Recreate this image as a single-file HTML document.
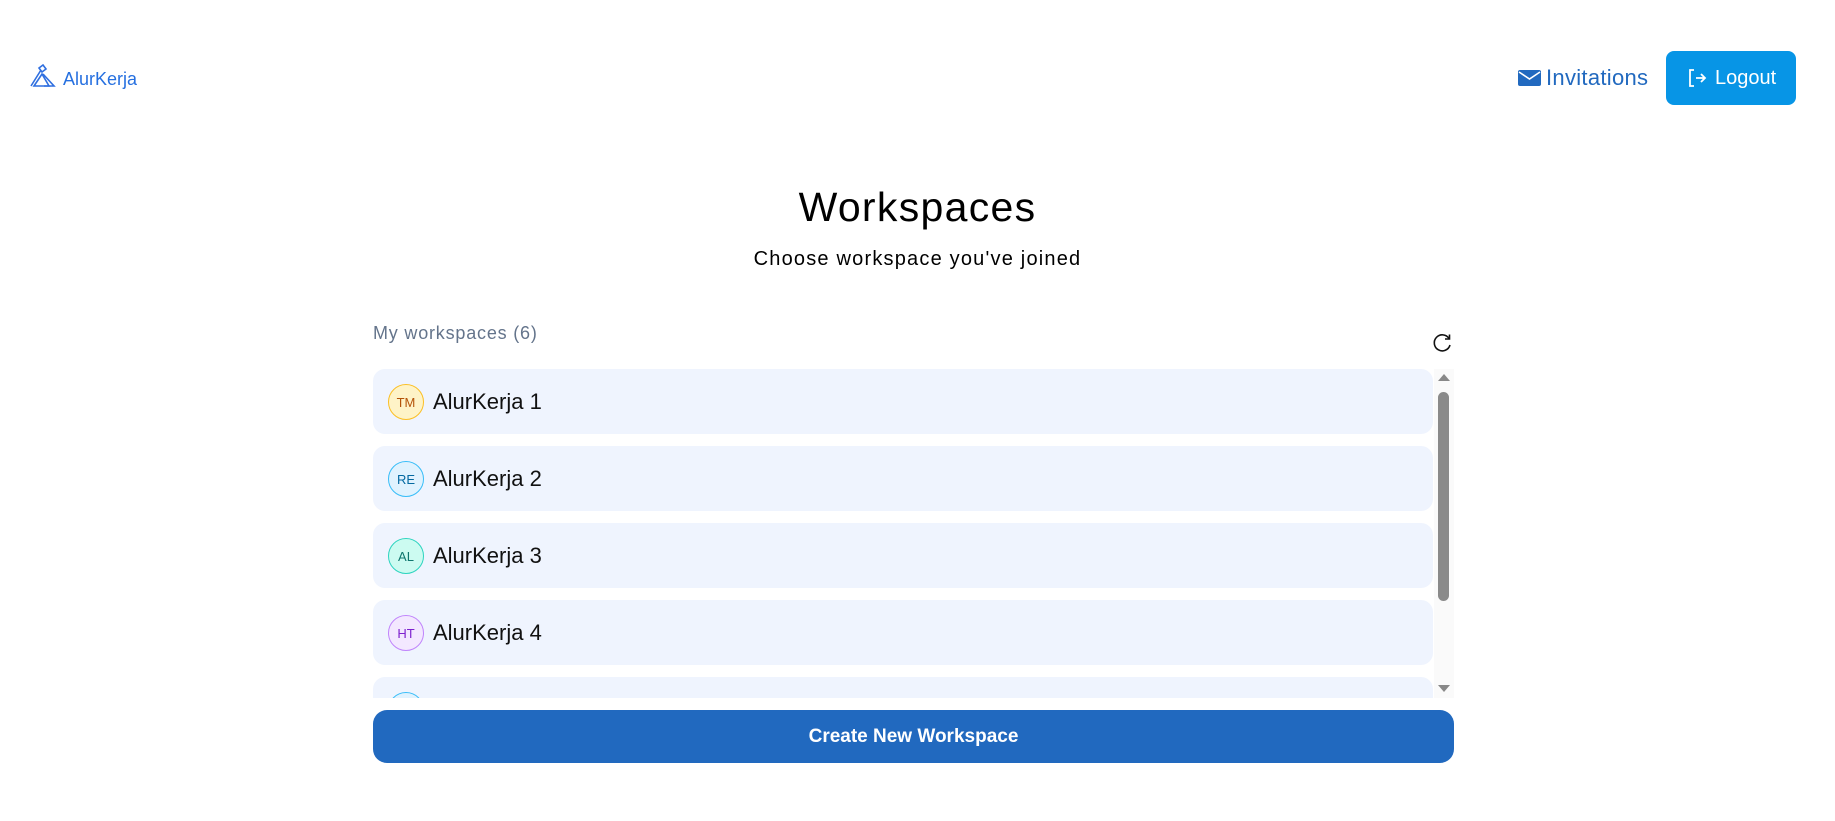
<!DOCTYPE html>
<html><head><meta charset="utf-8"><style>
*{box-sizing:border-box;margin:0;padding:0}
body{width:1835px;height:821px;background:#fff;font-family:"Liberation Sans",sans-serif;position:relative;overflow:hidden;color:#000}
.abs{position:absolute}
.row{position:absolute;left:373px;width:1060px;height:65px;background:#eff4fe;border-radius:12px}
.av{position:absolute;left:15px;top:15px;width:36px;height:36px;border-radius:50%;border:1.5px solid;font-size:13px;display:flex;align-items:center;justify-content:center}
.rt{position:absolute;left:60px;top:20px;font-size:22px;line-height:26px;color:#111}
</style></head><body>
<svg class="abs" style="left:30px;top:64px" width="26" height="24" viewBox="0 0 26 24" fill="none" stroke="#2f6fe0" stroke-width="1.6"><path d="M1 22 L11 6 M4 22 L12 10 L19 22 Z M9 4 L13 1 L16 5 L12 8 Z"/><path d="M13 10 L24 22 L14 22"/></svg>
<div class="abs" style="left:63px;top:68px;font-size:18px;line-height:22px;color:#2670e0">AlurKerja</div>

<svg class="abs" style="left:1518px;top:70px" width="23" height="16" viewBox="0 0 23 16"><rect width="23" height="16" rx="2" fill="#2169bf"/><path d="M1 2 L11.5 9 L22 2" stroke="#fff" stroke-width="1.6" fill="none"/></svg>
<div class="abs" style="left:1546px;top:65px;font-size:22px;line-height:26px;color:#2169bf;letter-spacing:0.3px">Invitations</div>
<div class="abs" style="left:1666px;top:51px;width:130px;height:54px;background:#0795e6;border-radius:8px;color:#fff">
<svg class="abs" style="left:21px;top:17px" width="20" height="20" viewBox="0 0 20 20" fill="none" stroke="#fff" stroke-width="1.8"><path d="M7 2 H3 V18 H7 M9 10 H18 M14 6 L18 10 L14 14"/></svg>
<div class="abs" style="left:49px;top:15px;font-size:20px;line-height:24px">Logout</div></div>

<div class="abs" style="left:0;width:1835px;top:184px;text-align:center;font-size:41px;line-height:46px;letter-spacing:1.3px">Workspaces</div>
<div class="abs" style="left:0;width:1835px;top:247px;text-align:center;font-size:20px;line-height:24px;letter-spacing:1.2px">Choose workspace you've joined</div>
<div class="abs" style="left:373px;top:322px;font-size:18px;line-height:22px;color:#64748b;letter-spacing:0.8px">My workspaces (6)</div>
<svg class="abs" style="left:1432px;top:333px" width="21" height="20" viewBox="0 0 21 20" fill="none" stroke="#111" stroke-width="1.6"><path d="M17 5.5 A8 8 0 1 0 18 12"/><path d="M17.5 1.5 V6 H13"/></svg>

<div class="abs" style="left:373px;top:369px;width:1081px;height:329px;overflow:hidden">
<div class="row" style="left:0;top:0"><div class="av" style="background:#fef3c7;border-color:#fbbf24;color:#b45309">TM</div><div class="rt">AlurKerja 1</div></div>
<div class="row" style="left:0;top:77px"><div class="av" style="background:#e0f2fe;border-color:#38bdf8;color:#0369a1">RE</div><div class="rt">AlurKerja 2</div></div>
<div class="row" style="left:0;top:154px"><div class="av" style="background:#ccfbf1;border-color:#2dd4bf;color:#0f766e">AL</div><div class="rt">AlurKerja 3</div></div>
<div class="row" style="left:0;top:231px"><div class="av" style="background:#f3e8ff;border-color:#c084fc;color:#7e22ce">HT</div><div class="rt">AlurKerja 4</div></div>
<div class="row" style="left:0;top:308px"><div class="av" style="background:#e0f2fe;border-color:#38bdf8;color:#0369a1">KO</div><div class="rt">AlurKerja 5</div></div>
<div class="abs" style="left:1061px;top:0;width:20px;height:329px;background:#fafafa"></div>
<div class="abs" style="left:1065px;top:5px;width:0;height:0;border-left:6px solid transparent;border-right:6px solid transparent;border-bottom:7px solid #888"></div>
<div class="abs" style="left:1065px;top:23px;width:11px;height:209px;background:#8a8a8a;border-radius:6px"></div>
<div class="abs" style="left:1065px;top:316px;width:0;height:0;border-left:6px solid transparent;border-right:6px solid transparent;border-top:7px solid #888"></div>
</div>

<div class="abs" style="left:373px;top:710px;width:1081px;height:53px;background:#2169bf;border-radius:14px;color:#fff;text-align:center;font-size:19px;line-height:53px;font-weight:bold">Create New Workspace</div>
</body></html>
